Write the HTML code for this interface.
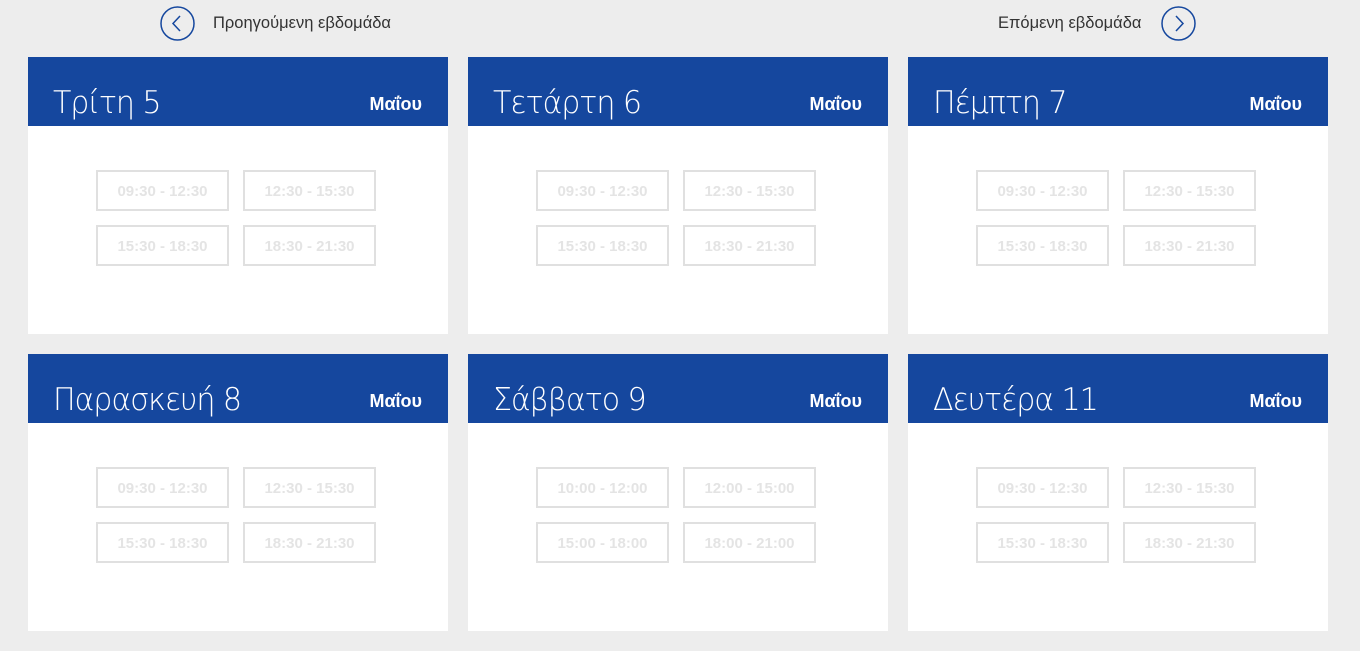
<!DOCTYPE html>
<html><head><meta charset="utf-8"><style>
body{margin:0;width:1360px;height:651px;background:#ededed;font-family:"Liberation Sans","DejaVu Sans",sans-serif;position:relative;overflow:hidden}
.nav{position:absolute;top:6px;height:34px;display:flex;align-items:center;font-size:16.5px;color:#333}
.card{position:absolute;width:420px;height:277px;background:#fff}
.hd{height:69px;background:#15479e;color:#fff;position:relative}
.t{position:absolute;left:25px;top:28px;font-size:31px;font-family:"DejaVu Sans","Liberation Sans",sans-serif;font-weight:200;letter-spacing:-1.1px;transform:scaleX(0.97);transform-origin:left}
.m{position:absolute;right:26px;top:37px;font-size:18px;font-weight:bold}
.b{position:absolute;width:129px;height:37px;border:2px solid #e0e0e0;color:#e4e4e4;font-size:15px;font-weight:bold;text-align:center;line-height:40px}
</style></head><body>
<div class="nav" style="left:160px"><svg width="35" height="35" viewBox="0 0 35 35"><circle cx="17.5" cy="17.5" r="16.5" fill="none" stroke="#15479e" stroke-width="1.5"/><path d="M20 10 L13 17.5 L20 25" fill="none" stroke="#15479e" stroke-width="1.5"/></svg><span style="margin-left:18px">Προηγούμενη εβδομάδα</span></div>
<div class="nav" style="left:998px"><span style="margin-right:20px">Επόμενη εβδομάδα</span><svg width="35" height="35" viewBox="0 0 35 35"><circle cx="17.5" cy="17.5" r="16.5" fill="none" stroke="#15479e" stroke-width="1.5"/><path d="M15 10 L22 17.5 L15 25" fill="none" stroke="#15479e" stroke-width="1.5"/></svg></div>

<div class="card" style="left:28px;top:57px"><div class="hd"><div class="t">Τρίτη 5</div><div class="m">Μαΐου</div></div>
<div class="b" style="left:68px;top:113px">09:30 - 12:30</div><div class="b" style="left:215px;top:113px">12:30 - 15:30</div><div class="b" style="left:68px;top:168px">15:30 - 18:30</div><div class="b" style="left:215px;top:168px">18:30 - 21:30</div></div>
<div class="card" style="left:468px;top:57px"><div class="hd"><div class="t">Τετάρτη 6</div><div class="m">Μαΐου</div></div>
<div class="b" style="left:68px;top:113px">09:30 - 12:30</div><div class="b" style="left:215px;top:113px">12:30 - 15:30</div><div class="b" style="left:68px;top:168px">15:30 - 18:30</div><div class="b" style="left:215px;top:168px">18:30 - 21:30</div></div>
<div class="card" style="left:908px;top:57px"><div class="hd"><div class="t">Πέμπτη 7</div><div class="m">Μαΐου</div></div>
<div class="b" style="left:68px;top:113px">09:30 - 12:30</div><div class="b" style="left:215px;top:113px">12:30 - 15:30</div><div class="b" style="left:68px;top:168px">15:30 - 18:30</div><div class="b" style="left:215px;top:168px">18:30 - 21:30</div></div>
<div class="card" style="left:28px;top:354px"><div class="hd"><div class="t">Παρασκευή 8</div><div class="m">Μαΐου</div></div>
<div class="b" style="left:68px;top:113px">09:30 - 12:30</div><div class="b" style="left:215px;top:113px">12:30 - 15:30</div><div class="b" style="left:68px;top:168px">15:30 - 18:30</div><div class="b" style="left:215px;top:168px">18:30 - 21:30</div></div>
<div class="card" style="left:468px;top:354px"><div class="hd"><div class="t">Σάββατο 9</div><div class="m">Μαΐου</div></div>
<div class="b" style="left:68px;top:113px">10:00 - 12:00</div><div class="b" style="left:215px;top:113px">12:00 - 15:00</div><div class="b" style="left:68px;top:168px">15:00 - 18:00</div><div class="b" style="left:215px;top:168px">18:00 - 21:00</div></div>
<div class="card" style="left:908px;top:354px"><div class="hd"><div class="t">Δευτέρα 11</div><div class="m">Μαΐου</div></div>
<div class="b" style="left:68px;top:113px">09:30 - 12:30</div><div class="b" style="left:215px;top:113px">12:30 - 15:30</div><div class="b" style="left:68px;top:168px">15:30 - 18:30</div><div class="b" style="left:215px;top:168px">18:30 - 21:30</div></div>
</body></html>
